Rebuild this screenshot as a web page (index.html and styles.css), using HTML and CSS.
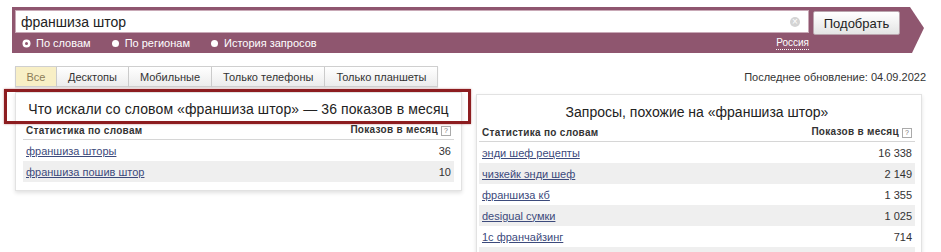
FILE: index.html
```html
<!DOCTYPE html>
<html lang="ru">
<head>
    <meta charset="UTF-8">
    <meta name="viewport" content="width=device-width, initial-scale=1.0">
    <title>Подбор слов</title>
<link rel="stylesheet" href="styles.css">
</head>
<body>
    <!-- Поисковая строка -->
    <div class="search">
        <div class="search-main">
            <div class="field">
                <span class="field-text">франшиза штор</span>
                <span class="clear">&times;</span>
            </div>
            <div class="options">
                <span class="option"><span class="radio radio-on"></span>По словам</span>
                <span class="option"><span class="radio"></span>По регионам</span>
                <span class="option"><span class="radio"></span>История запросов</span>
                <span class="region">Россия</span>
            </div>
        </div>
        <button class="search-btn">Подобрать</button>
    </div>

    <!-- Вкладки -->
    <div class="toolbar">
        <div class="tabs">
            <span class="tab tab-active">Все</span>
            <span class="tab">Десктопы</span>
            <span class="tab">Мобильные</span>
            <span class="tab">Только телефоны</span>
            <span class="tab">Только планшеты</span>
        </div>
        <div class="updated">Последнее обновление: 04.09.2022</div>
    </div>

    <!-- Таблицы -->
    <div class="panels">
        <div class="panel panel-left">
            <div class="highlight"></div>
            <div class="panel-title">Что искали со словом «франшиза штор» — 36 показов в месяц</div>
            <div class="row row-head">
                <span>Статистика по словам</span>
                <span>Показов в месяц <span class="help">?</span></span>
            </div>
            <div class="row"><a href="#">франшиза шторы</a><span>36</span></div>
            <div class="row row-alt"><a href="#">франшиза пошив штор</a><span>10</span></div>
        </div>
        <div class="panel panel-right">
            <div class="panel-title">Запросы, похожие на «франшиза штор»</div>
            <div class="row row-head">
                <span>Статистика по словам</span>
                <span>Показов в месяц <span class="help">?</span></span>
            </div>
            <div class="row"><a href="#">энди шеф рецепты</a><span>16 338</span></div>
            <div class="row row-alt"><a href="#">чизкейк энди шеф</a><span>2 149</span></div>
            <div class="row"><a href="#">франшиза кб</a><span>1 355</span></div>
            <div class="row row-alt"><a href="#">desigual сумки</a><span>1 025</span></div>
            <div class="row"><a href="#">1с франчайзинг</a><span>714</span></div>
            <div class="row row-alt"><a href="#">&nbsp;</a><span></span></div>
        </div>
    </div>
</body>
</html>
```

FILE: styles.css
```css
/* Общие стили */
body {
    margin: 0;
    padding: 0;
    background-color: #fff;
    font-family: 'Liberation Sans', Arial, sans-serif;
    color: #333;
}

/* Поисковая строка */
.search {
    display: flex;
    align-items: flex-start;
    gap: 4px;
    width: 912px;
    height: 46px;
    margin: 7px 0 0 12px;
    padding: 3px 0 0 3px;
    box-sizing: border-box;
    background-color: #8f566f;
    clip-path: polygon(0 0, 898px 0, 912px 21px, 900px 100%, 0 100%);
}

.search-main {
    width: 794px;
}

.field {
    display: flex;
    align-items: center;
    justify-content: space-between;
    height: 23px;
    padding: 0 8px 0 5px;
    box-sizing: border-box;
    background-color: #fff;
    border: 1px solid #c9a9b7;
}

.field-text {
    font-size: 14px;
    color: #222;
}

.clear {
    display: flex;
    align-items: center;
    justify-content: center;
    width: 10px;
    height: 10px;
    border-radius: 50%;
    background-color: #d4d4d4;
    color: #fff;
    font-size: 10px;
    line-height: 1;
}

.options {
    display: flex;
    align-items: center;
    height: 20px;
    padding-left: 8px;
    font-size: 11px;
    color: #fff;
}

.option {
    display: flex;
    align-items: center;
    gap: 6px;
    margin-right: 21px;
}

.radio {
    width: 7px;
    height: 7px;
    border-radius: 50%;
    background-color: #fff;
}

.radio-on {
    width: 3px;
    height: 3px;
    border: 2px solid #fff;
    background-color: #8f566f;
    box-shadow: 0 0 0 0.5px #fff;
}

.region {
    margin-left: auto;
    border-bottom: 1px dotted #fff;
    font-size: 10px;
    line-height: 12px;
}

.search-btn {
    width: 87px;
    height: 24px;
    margin-top: 1px;
    padding: 0;
    border: 1px solid #b9a4ad;
    border-radius: 2px;
    background: linear-gradient(#ffffff, #e4e4e4);
    font-family: 'Liberation Sans', Arial, sans-serif;
    font-size: 13px;
    color: #222;
}

/* Вкладки */
.toolbar {
    display: flex;
    align-items: center;
    justify-content: space-between;
    margin-top: 13px;
    padding: 0 15px 0 15px;
}

.tabs {
    display: flex;
}

.tab {
    display: flex;
    align-items: center;
    justify-content: center;
    height: 19px;
    padding: 0 11px;
    border: 1px solid #cfcfcf;
    border-left: none;
    background: linear-gradient(#ffffff, #ececec);
    font-size: 11px;
    color: #333;
    box-shadow: 0 1px 1px rgba(0, 0, 0, 0.1);
}

.tab:first-child {
    border-left: 1px solid #cfcfcf;
}

.tab-active {
    width: 18px;
    background: #f8efc6;
    color: #8c7c58;
}

.updated {
    font-size: 11px;
    color: #333;
}

/* Таблицы */
.panels {
    display: flex;
    align-items: flex-start;
    gap: 14px;
    padding-left: 15px;
}

.panel {
    position: relative;
    border: 1px solid #e2e2e2;
    box-shadow: 0 2px 4px rgba(0, 0, 0, 0.12);
    background-color: #fff;
}

.panel-left {
    width: 431px;
    margin-top: 5px;
    padding: 0 7px 8px 7px;
}

.panel-right {
    width: 436px;
    margin-top: 7px;
    padding: 0 6px 0 2px;
}

.panel-title {
    text-align: center;
    font-size: 14px;
    line-height: 18px;
    color: #222;
}

.panel-left .panel-title {
    padding: 7px 0 3px;
    letter-spacing: 0.1px;
}

.panel-right .panel-title {
    padding: 8px 0 2px;
}

/* Рамка выделения */
.highlight {
    position: absolute;
    left: -12px;
    top: -4px;
    width: 461px;
    height: 29px;
    border: 3px solid #8d1d20;
    box-shadow: 0 0 2px rgba(141, 29, 32, 0.5);
}

.row {
    display: flex;
    align-items: center;
    justify-content: space-between;
    height: 21px;
    padding: 0 3px;
    font-size: 11px;
}

.row a {
    color: #3c4a7c;
    text-decoration: underline;
}

.row-alt {
    background-color: #efefef;
}

.row-head {
    height: 18px;
    border-bottom: 1px solid #d6d6d6;
    font-size: 10px;
    font-weight: bold;
    letter-spacing: 0.3px;
    color: #333;
}

.help {
    display: inline-block;
    width: 8px;
    height: 8px;
    border: 1px solid #aaa;
    font-size: 7px;
    line-height: 8px;
    text-align: center;
    font-weight: normal;
    letter-spacing: 0;
    color: #777;
    vertical-align: 0;
}
```
